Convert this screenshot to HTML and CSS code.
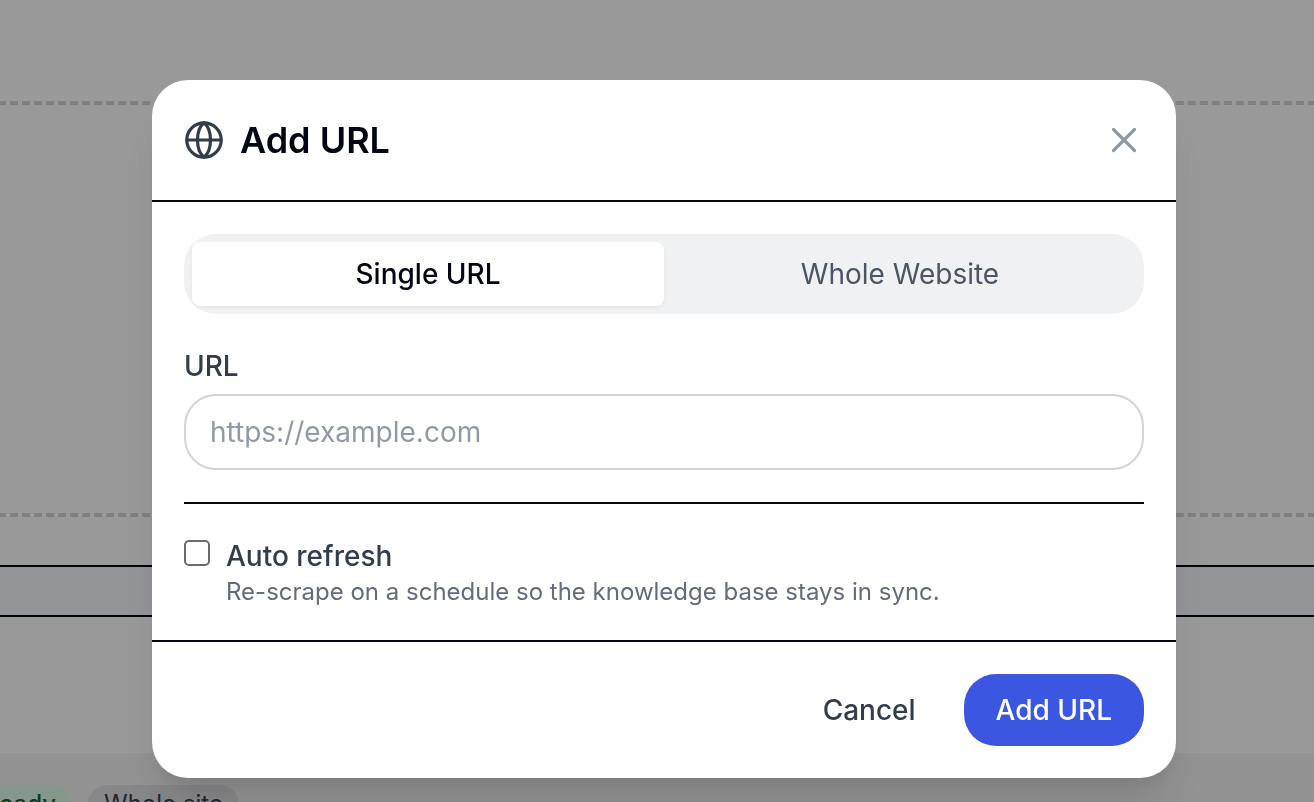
FILE: index.html
```html
<!DOCTYPE html>
<html lang="en">
<head>
    <meta charset="UTF-8">
    <meta name="viewport" content="width=device-width, initial-scale=1.0">
    <title>Add URL</title>
    <link rel="stylesheet" href="styles.css">
</head>
<body>
    <main class="page">
        <div class="drop-zone"></div>
        <div class="table-head"></div>
        <div class="table-space"></div>
        <div class="table-row">
            <span class="tag tag-ready">Ready</span>
            <span class="tag">Whole site</span>
        </div>
    </main>

    <div class="overlay">
        <div class="modal" role="dialog" aria-labelledby="modalTitle">
            <div class="modal-header">
                <svg class="icon" viewBox="0 0 40 40" aria-hidden="true">
                    <circle cx="20" cy="20" r="17.2"/>
                    <path d="M2.800 20h34.400"/>
                    <path d="M20 2.800C15.500 6.500 13.500 13 13.500 20S15.500 33.500 20 37.200C24.500 33.500 26.500 27 26.500 20S24.500 6.500 20 2.800Z"/>
                </svg>
                <h1 id="modalTitle">Add URL</h1>
                <button type="button" class="close-btn" aria-label="Close">
                    <svg class="icon" viewBox="0 0 40 40" aria-hidden="true">
                        <path d="M9.500 9.500l21 21M30.500 9.500l-21 21"/>
                    </svg>
                </button>
            </div>

            <form id="urlForm">
                <div class="modal-body">
                    <div class="tabs">
                        <button type="button" class="tab active">Single URL</button>
                        <button type="button" class="tab">Whole Website</button>
                    </div>

                    <div class="form-group">
                        <label for="url">URL</label>
                        <input type="url" id="url" placeholder="https://example.com">
                    </div>

                    <div class="refresh">
                        <input type="checkbox" id="autoRefresh">
                        <label for="autoRefresh">
                            Auto refresh
                            <span class="hint">Re-scrape on a schedule so the knowledge base stays in sync.</span>
                        </label>
                    </div>
                </div>

                <div class="modal-footer">
                    <button type="button" class="btn">Cancel</button>
                    <button type="submit" class="btn btn-primary">Add URL</button>
                </div>
            </form>
        </div>
    </div>
</body>
</html>
```
FILE: styles.css
```css
* {
    box-sizing: border-box;
    font-family: Inter, sans-serif;
}
body {
    margin: 0;
    background-color: white;
    color: #030712;
}
button {
    padding: 0;
    border: none;
    background: none;
    font-size: 28px;
    font-weight: 500;
    line-height: 40px;
    cursor: pointer;
}

/* Page behind the modal */
.page {
    height: 100vh;
    padding-top: 101px;
    overflow: hidden;
}
.drop-zone {
    height: 416px;
    margin: 0 -2px 48px;
    border: 4px dashed #d1d5db;
    border-width: 4px 0;
}
.table-head {
    height: 52px;
    background-color: #f5f7fd;
    border: 2px solid #030712;
    border-width: 2px 0;
}
.table-space {
    height: 136px;
}
.table-row {
    display: flex;
    gap: 16px;
    height: 120px;
    padding-top: 32px;
    background-color: #f3f3f3;
}
.tag {
    height: 40px;
    padding: 0 16px;
    border-radius: 20px;
    background-color: #e1e1e6;
    color: #374151;
    font-size: 24px;
    font-weight: 400;
    line-height: 38px;
}
.tag-ready {
    margin-left: -32px;
    background-color: #dcfce7;
    color: #166534;
    font-weight: 500;
}

/* Modal */
.overlay {
    position: fixed;
    inset: 0;
    padding: 80px 16px 24px 30px;
    background-color: rgba(0, 0, 0, 0.4);
}
.modal {
    max-width: 1024px;
    margin: 0 auto;
    background-color: white;
    border-radius: 36px;
    box-shadow: 0 40px 50px -10px rgba(0, 0, 0, 0.1), 0 16px 20px -12px rgba(0, 0, 0, 0.1);
}
.modal-header {
    display: flex;
    align-items: center;
    gap: 16px;
    padding: 32px;
    border-bottom: 2px solid #030712;
}
.icon {
    display: block;
    width: 40px;
    height: 40px;
    fill: none;
    stroke: #323c4b;
    stroke-width: 3.2;
    stroke-linecap: round;
}
h1 {
    flex: 1;
    margin: 0;
    font-size: 36px;
    font-weight: 600;
    line-height: 56px;
}
.close-btn .icon {
    stroke: #9299a6;
}
.modal-body {
    padding: 32px;
}
.tabs {
    display: flex;
    margin-bottom: 32px;
    padding: 8px;
    background-color: #f0f1f3;
    border-radius: 32px;
}
.tab {
    flex: 1;
    padding: 12px;
    border-radius: 8px;
    color: #4b5563;
    font-weight: 400;
}
.tab.active {
    background-color: white;
    color: #030712;
    font-weight: 500;
    box-shadow: 0 2px 4px rgba(0, 0, 0, 0.05);
}
label {
    display: block;
    color: #323c4b;
    font-size: 28px;
    font-weight: 500;
    line-height: 40px;
}
input[type="url"] {
    display: block;
    width: 100%;
    height: 76px;
    margin-top: 8px;
    padding: 16px 24px;
    border: 2px solid #d1d5db;
    border-radius: 32px;
    font-size: 28px;
}
input::placeholder {
    color: #9299a6;
}
.refresh {
    display: flex;
    gap: 16px;
    margin-top: 32px;
    padding-top: 32px;
    border-top: 2px solid #030712;
}
input[type="checkbox"] {
    appearance: none;
    width: 26px;
    height: 26px;
    margin: 4px 0 0;
    border: 2px solid #6b6b6b;
    border-radius: 5px;
}
input[type="checkbox"]:checked {
    background-color: #3b57e2;
}
.hint {
    display: block;
    color: #646b7a;
    font-size: 24px;
    font-weight: 400;
    line-height: 32px;
}
.modal-footer {
    display: flex;
    justify-content: flex-end;
    gap: 16px;
    padding: 32px;
    border-top: 2px solid #030712;
}
.btn {
    padding: 16px 32px;
    border-radius: 32px;
    color: #323c4b;
}
.btn-primary {
    background-color: #3b57e2;
    color: white;
}
```
